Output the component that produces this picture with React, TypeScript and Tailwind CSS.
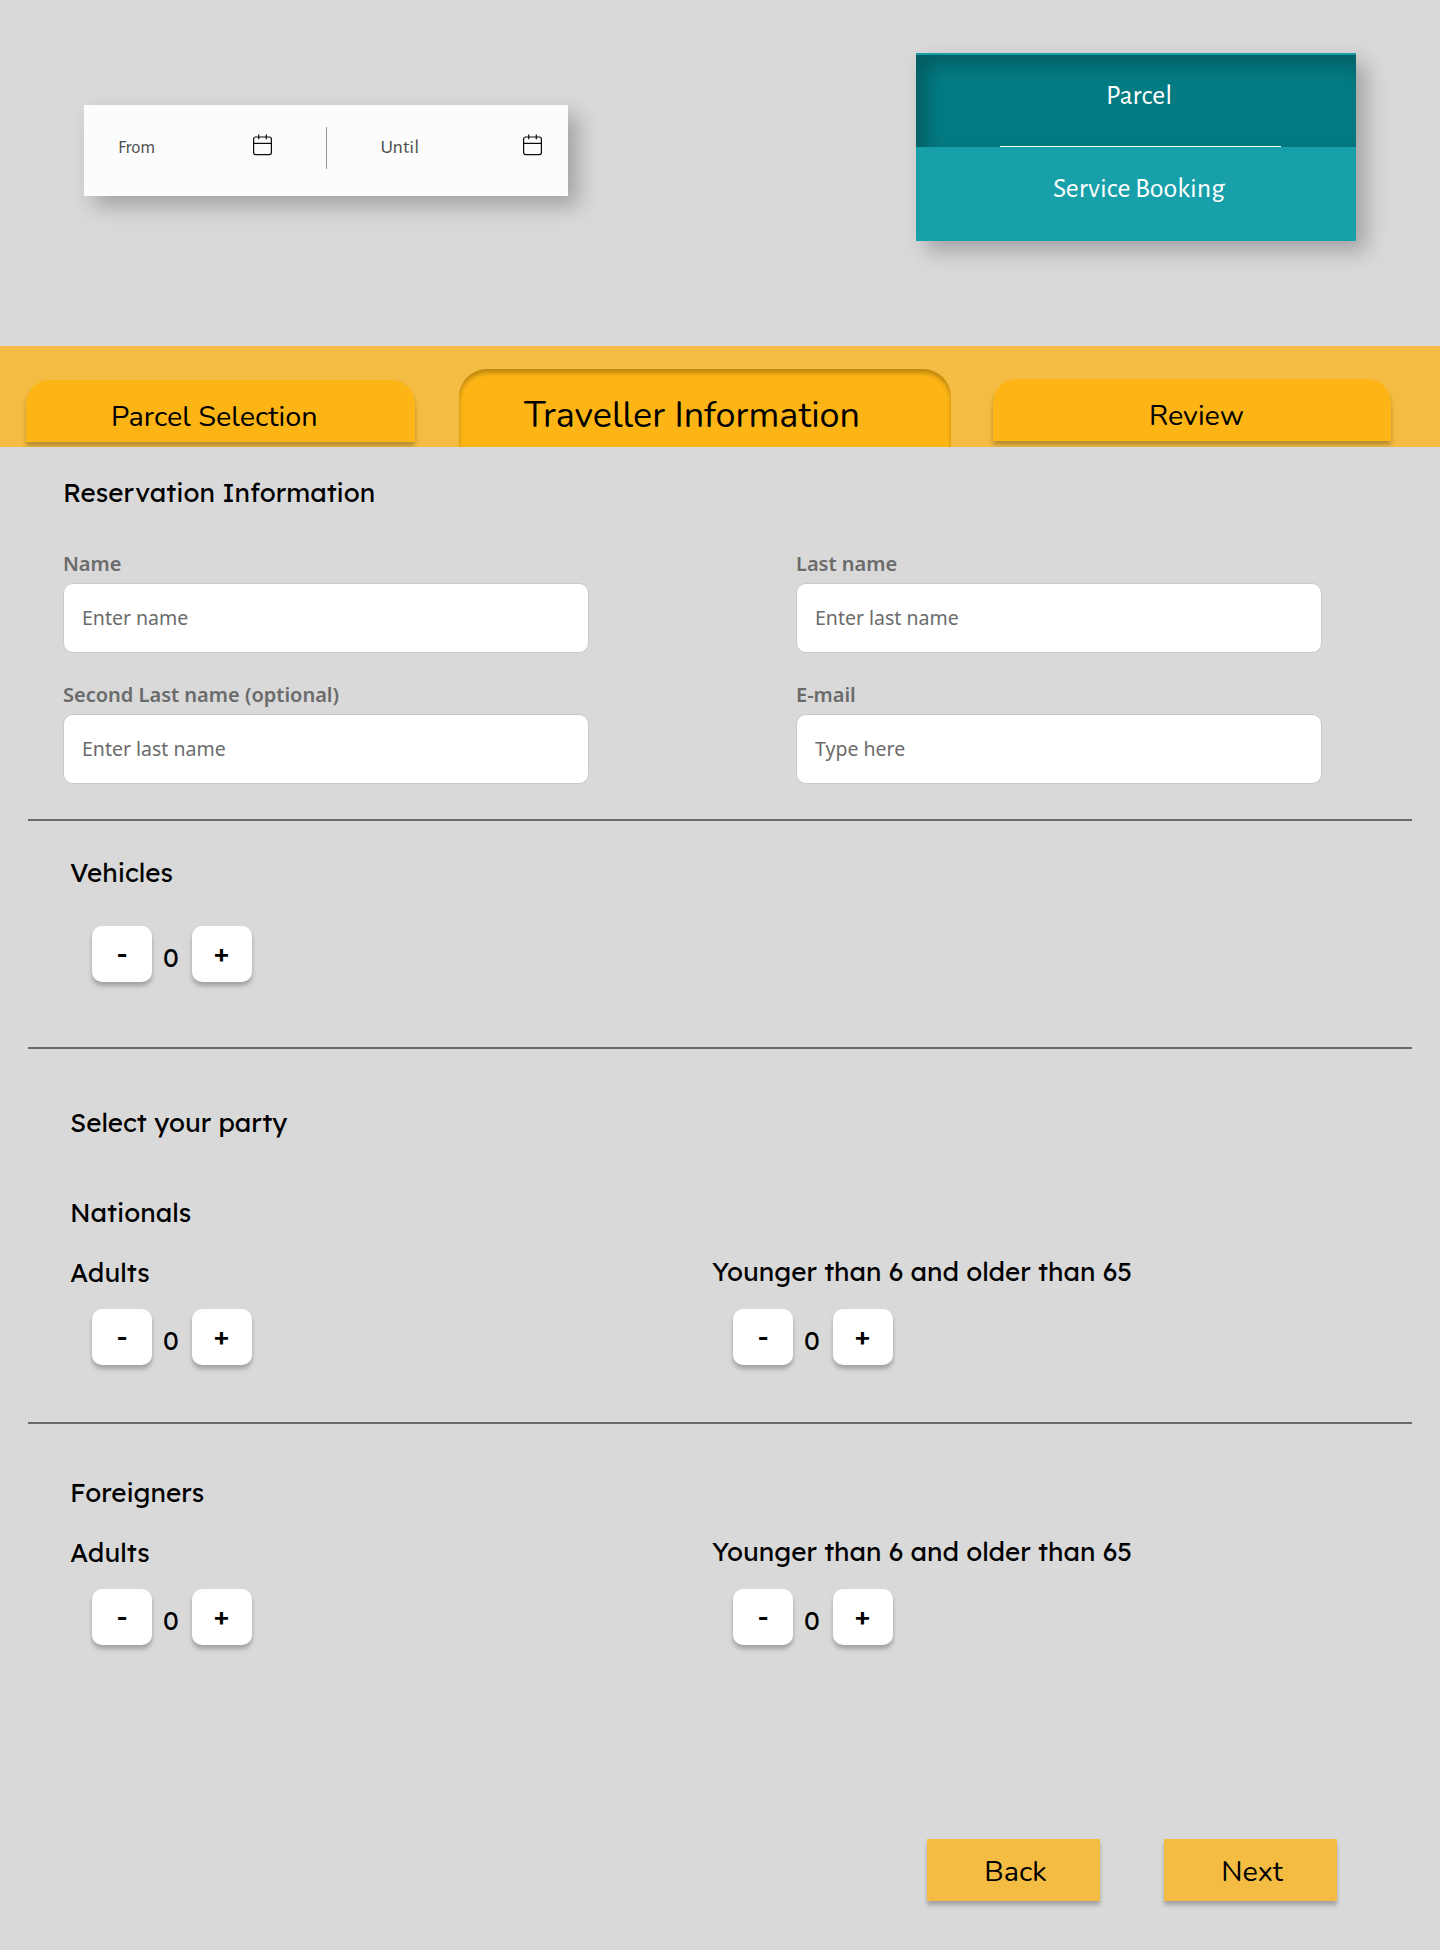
import React from "react";

function CalendarIcon() {
  return (
    <svg width="20" height="22" viewBox="0 0 20 22" fill="none" stroke="#0c0c0c" strokeWidth="1.2" className="shrink-0">
      <rect x="0.6" y="3" width="17.8" height="17.6" rx="2" />
      <path d="M0.6 9.3H18.4M5.7 0.4V5.2M13.3 0.4V5.2" />
    </svg>
  );
}

function Heading({ children, className = "" }: { children: React.ReactNode; className?: string }) {
  return (
    <h2 className={`h-8 whitespace-nowrap font-['Lexend','Inter',sans-serif] text-[26px] leading-8 text-black ${className}`}>
      {children}
    </h2>
  );
}

function Field({ label, placeholder }: { label: string; placeholder: string }) {
  return (
    <label className="block w-[526px] font-['Noto_Sans',sans-serif]">
      <span className="block h-7 pt-px text-[20px] font-semibold leading-7 text-[#6b6b6b]">{label}</span>
      <input
        placeholder={placeholder}
        className="mt-1.5 block h-[70px] w-full rounded-[10px] border border-[#cacaca] bg-white px-[18px] pb-0.5 text-[19.5px] text-[#6b6b6b] placeholder:text-[#6b6b6b]"
      />
    </label>
  );
}

function StepButton({ children, className = "" }: { children: string; className?: string }) {
  return (
    <button className={`h-14 w-[60px] rounded-[10px] bg-white pb-px font-['Lexend','Inter',sans-serif] text-[26px] font-medium leading-8 shadow-[0_4px_4px_rgba(0,0,0,0.25)] ${className}`}>
      {children}
    </button>
  );
}

function Stepper({ className = "" }: { className?: string }) {
  return (
    <div className={`flex h-14 w-40 justify-between ${className}`}>
      <StepButton>-</StepButton>
      <span className="mt-4 -ml-0.5 h-8 font-['Lexend','Inter',sans-serif] text-[26px] leading-8">0</span>
      <StepButton className="pr-px">+</StepButton>
    </div>
  );
}

function Rule() {
  return <div className="ml-7 h-0.5 w-[1384px] bg-[#6b6b6b]" />;
}

function PartyRow() {
  return (
    <div className="mt-7 flex pl-[70px]">
      <div className="w-[642px]">
        <Heading className="mb-5">Adults</Heading>
        <Stepper className="ml-[22px]" />
      </div>
      <div>
        <Heading className="-mt-px mb-[21px]">Younger than 6 and older than 65</Heading>
        <Stepper className="ml-[21px]" />
      </div>
    </div>
  );
}

export default function App() {
  return (
    <div className="h-[1950px] w-[1440px] overflow-hidden bg-[#d9d9d9] text-black">
      <header className="flex h-[346px] items-start pl-[84px]">
        <div className="mt-[105px] flex h-[91px] w-[484px] bg-[#fcfcfc] pl-[34px] font-['Alegreya_Sans','Open_Sans',sans-serif] text-[#4d4d4d] shadow-[10px_10px_20px_rgba(0,0,0,0.25)]">
          <span className="mt-[33px] w-[135px] text-[18.6px] leading-5">From</span>
          <div className="mt-[29px]"><CalendarIcon /></div>
          <div className="mt-[22px] ml-[53px] h-[42px] w-px bg-[#959595]" />
          <span className="mt-8 ml-[53.5px] w-[142.5px] text-[20px] leading-5">Until</span>
          <div className="mt-[29px]"><CalendarIcon /></div>
        </div>
        <nav className="mt-[53px] ml-[348px] h-[188px] w-[440px] bg-[#179faa] pt-0.5 font-['Alegreya_Sans','Lato',sans-serif] text-[28px] text-white shadow-[10px_10px_20px_rgba(0,0,0,0.25)]">
          <div className="flex h-[92px] flex-col items-center bg-[#037b83] shadow-[inset_10px_10px_20px_rgba(0,0,0,0.25)]">
            <span className="mt-[25px] ml-1.5 h-8 leading-8">Parcel</span>
            <div className="mt-[34px] ml-[9px] h-px w-[281px] bg-white" />
          </div>
          <div className="flex justify-center pt-[26px]">
            <span className="ml-1.5 h-8 leading-8">Service Booking</span>
          </div>
        </nav>
      </header>

      <div className="flex h-[101px] items-start overflow-hidden bg-[#f4bc42] pl-[26px] font-['Nunito','Lato',sans-serif]">
        <button className="mt-[34px] h-[62px] w-[389px] rounded-t-[24px] bg-[#fdb515] pt-3 pl-[85px] text-left text-[28.8px] leading-10 shadow-[0_4px_4px_rgba(0,0,0,0.25)]">
          Parcel Selection
        </button>
        <button className="mt-[23px] ml-11 h-[78px] w-[492px] rounded-t-[28px] bg-[#fdb515] pt-4 pl-[65px] text-left text-[36px] leading-[44px] shadow-[inset_0_4px_4px_rgba(0,0,0,0.25)]">
          Traveller Information
        </button>
        <button className="mt-[33px] ml-[42px] h-[62px] w-[398px] rounded-t-[24px] bg-[#fdb515] pt-[11px] pl-[156px] text-left text-[28.8px] leading-10 shadow-[0_4px_4px_rgba(0,0,0,0.25)]">
          Review
        </button>
      </div>

      <main>
        <section className="pt-[30px] pl-[63px]">
          <Heading>Reservation Information</Heading>
          <div className="mt-10 grid w-[1259px] grid-cols-2 gap-x-[207px] gap-y-[27px]">
            <Field label="Name" placeholder="Enter name" />
            <Field label="Last name" placeholder="Enter last name" />
            <Field label="Second Last name (optional)" placeholder="Enter last name" />
            <Field label="E-mail" placeholder="Type here" />
          </div>
        </section>
        <div className="h-[35px]" />
        <Rule />
        <section className="pt-9 pl-[70px]">
          <Heading className="mb-[37px]">Vehicles</Heading>
          <Stepper className="ml-[22px]" />
        </section>
        <div className="h-[65px]" />
        <Rule />
        <section className="pt-[58px]">
          <Heading className="mb-[58px] ml-[70px]">Select your party</Heading>
          <Heading className="ml-[70px]">Nationals</Heading>
          <PartyRow />
        </section>
        <div className="h-[57px]" />
        <Rule />
        <section className="pt-[53px]">
          <Heading className="ml-[70px]">Foreigners</Heading>
          <PartyRow />
        </section>
        <footer className="mt-[194px] flex gap-16 pl-[927px] font-['Nunito','Lato',sans-serif] text-[28.8px]">
          <button className="h-[62px] w-[173px] bg-[#f4bc42] pt-1 pl-1 shadow-[0_4px_4px_rgba(0,0,0,0.25)]">Back</button>
          <button className="h-[62px] w-[173px] bg-[#f4bc42] pt-1 pl-[3px] shadow-[0_4px_4px_rgba(0,0,0,0.25)]">Next</button>
        </footer>
      </main>
    </div>
  );
}
